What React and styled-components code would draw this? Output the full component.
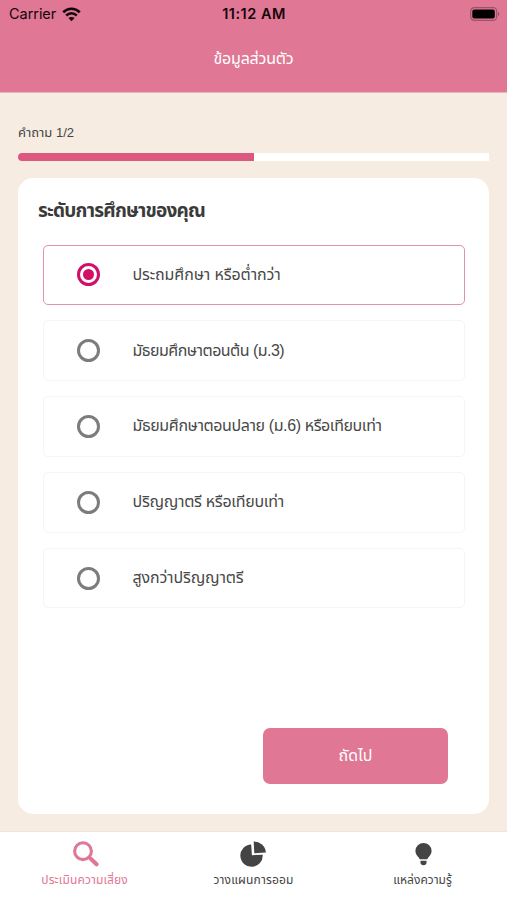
import React, { useState } from 'react';
import styled, { createGlobalStyle } from 'styled-components';

const pink = '#df7795';

const GlobalStyle = createGlobalStyle`
  *, *::before, *::after { box-sizing: border-box; }
  body { margin: 0; background: #f6ece2; }
  button { font: inherit; border: 0; background: none; padding: 0; }
`;

const Screen = styled.div`
  width: 507px;
  height: 900px;
  display: flex;
  flex-direction: column;
  overflow: hidden;
  background: #f6ece2;
  color: #444;
  font-family: 'Liberation Sans', 'Noto Sans Thai', sans-serif;
`;

const Header = styled.header`
  height: 93px;
  flex: none;
  background: ${pink};
  border-bottom: 1px solid #e8b4bf;
`;

const StatusBar = styled.div`
  height: 28px;
  display: grid;
  grid-template-columns: 1fr auto 1fr;
  align-items: center;
  padding: 0 7px 0 9px;
  color: #16060b;
  font: 400 14.5px/28px Inter, sans-serif;
`;

const Carrier = styled.div`
  display: flex;
  align-items: center;
  gap: 6px;
  letter-spacing: -0.05px;
`;

const Clock = styled.div`
  font-weight: 600;
  letter-spacing: 0.5px;
  margin-right: 1px;
`;

const BatterySlot = styled.div`
  display: flex;
  justify-content: flex-end;
`;

const Label = styled.span`
  display: block;
  white-space: nowrap;
  font-size: ${(p) => p.$size}px;
  line-height: 24px;
  letter-spacing: ${(p) => p.$track || 0}px;
  font-weight: ${(p) => p.$weight || 400};
`;

const PageTitle = styled.h1`
  margin: 0;
  padding-top: 19px;
  display: flex;
  justify-content: center;
  color: #fff;
  font-weight: 400;
`;

const Content = styled.main`
  flex: 1;
  min-height: 0;
  padding: 28px 18px 17px;
  display: flex;
  flex-direction: column;
`;

const Progress = styled.div`
  height: 8px;
  flex: none;
  margin: 8px 0 17px;
  border-radius: 4px 0 0 4px;
  overflow: hidden;
  background: #fff;
`;

const ProgressFill = styled.div`
  width: 50%;
  height: 100%;
  background: #dc5880;
`;

const Card = styled.section`
  flex: 1;
  min-height: 0;
  padding: 21px 25px 30px;
  border-radius: 15px;
  background: #fff;
  display: flex;
  flex-direction: column;
`;

const Question = styled.h2`
  margin: 0 0 21.5px -5px;
  color: #3b3b3b;
`;

const Options = styled.div`
  display: flex;
  flex-direction: column;
  gap: 15px;
`;

const Option = styled.button`
  width: 422px;
  height: 60.8px;
  display: flex;
  align-items: center;
  padding-left: 33px;
  border: 1px solid ${(p) => (p.$selected ? '#e391ac' : '#f5f5f5')};
  border-radius: 5px;
  color: #484848;
  text-align: left;
`;

const Radio = styled.span`
  width: 23px;
  height: 23px;
  margin-right: 32.5px;
  flex: none;
  display: grid;
  place-items: center;
  border: 3px solid ${(p) => (p.$selected ? '#d10f68' : '#7c7c7c')};
  border-radius: 50%;

  &::after {
    content: '';
    width: 11px;
    height: 11px;
    border-radius: 50%;
    background: ${(p) => (p.$selected ? '#d10f68' : 'transparent')};
  }
`;

const NextButton = styled.button`
  width: 185px;
  height: 56px;
  margin: auto 16px 0 auto;
  display: flex;
  align-items: center;
  justify-content: center;
  border-radius: 7px;
  background: ${pink};
  color: #fff;
`;

const TabBar = styled.nav`
  height: 69px;
  flex: none;
  display: grid;
  grid-template-columns: repeat(3, 169px);
  background: #fff;
  border-top: 1px solid #eee5de;
`;

const Tab = styled.button`
  display: flex;
  flex-direction: column;
  align-items: center;
  padding-top: 7px;
  color: ${(p) => (p.$active ? pink : '#444')};

  svg { display: block; height: 29px; }
`;

const WifiIcon = () => (
  <svg width="19" height="15" viewBox="0 0 19 15" fill="none" stroke="#16060b" strokeWidth="2.6">
    <path d="M1.2 5.2C6 .6 13 .6 17.8 5.2" />
    <path d="M4.2 8.5C7.3 5.6 11.7 5.6 14.8 8.5" />
    <path d="M9.5 14.2 6.4 11.1C8.2 9.5 10.8 9.5 12.6 11.1Z" fill="#16060b" stroke="none" />
  </svg>
);

const BatteryIcon = () => (
  <svg width="30" height="14" viewBox="0 0 30 14">
    <rect x=".7" y=".7" width="26" height="12.6" rx="3.6" fill="none" stroke="#9c5368" strokeWidth="1.2" />
    <rect x="2.3" y="2.4" width="22.5" height="9.2" rx="2" fill="#000" />
    <path d="M28 4.8c1.8.8 1.8 3.6 0 4.4Z" fill="#9c5368" />
  </svg>
);

const SearchIcon = () => (
  <svg width="28" height="29" viewBox="0 0 28 29" fill="none" stroke="currentColor">
    <circle cx="12" cy="12.2" r="8.4" strokeWidth="3.1" />
    <path d="m18 18.2 1.5 1.5" strokeWidth="3" />
    <path d="m20 20 5.500 5.300" strokeWidth="4.200" strokeLinecap="round" />
  </svg>
);

const PieIcon = () => (
  <svg width="27" height="29" viewBox="0 0 27 29" fill="currentColor">
    <path d="M11.2 5.4 11.9 16.200 22.700 15.800A11.200 11.200 0 1 1 11.200 5.400Z" />
    <path d="M13.700 2.400A12.200 12.200 0 0 1 25.900 13.600L14.300 14.200Z" />
  </svg>
);

const BulbIcon = () => (
  <svg width="18" height="29" viewBox="0 0 18 29" fill="currentColor">
    <path d="M9.500 4a8.100 8.100 0 0 1 8.100 8c0 3.200-1.900 4.700-3.300 6.600-.5.800-.8 1.700-1.500 1.700H6.200c-.7 0-1-.9-1.500-1.700C3.300 16.700 1.400 15.200 1.400 12a8.100 8.100 0 0 1 8.100-8Z" />
    <path d="M6.500 21.700h6v2c0 1.500-1.200 2.500-3 2.500s-3-1-3-2.500Z" />
  </svg>
);

const options = [
  { text: 'ประถมศึกษา หรือต่ำกว่า', track: -0.12 },
  { text: 'มัธยมศึกษาตอนต้น (ม.3)', track: -0.53 },
  { text: 'มัธยมศึกษาตอนปลาย (ม.6) หรือเทียบเท่า', track: -0.4 },
  { text: 'ปริญญาตรี หรือเทียบเท่า', track: -0.28 },
  { text: 'สูงกว่าปริญญาตรี', track: -0.15 },
];

const tabs = [
  { text: 'ประเมินความเสี่ยง', Icon: SearchIcon, track: 0.12 },
  { text: 'วางแผนการออม', Icon: PieIcon, track: 0.15 },
  { text: 'แหล่งความรู้', Icon: BulbIcon, track: 0 },
];

export default function App() {
  const [selected, setSelected] = useState(0);
  return (
    <>
      <GlobalStyle />
      <Screen>
        <Header>
          <StatusBar>
            <Carrier>Carrier <WifiIcon /></Carrier>
            <Clock>11:12 AM</Clock>
            <BatterySlot><BatteryIcon /></BatterySlot>
          </StatusBar>
          <PageTitle><Label $size={16} $track={-0.2}>ข้อมูลส่วนตัว</Label></PageTitle>
        </Header>
        <Content>
          <Label $size={13}>คำถาม 1/2</Label>
          <Progress><ProgressFill /></Progress>
          <Card>
            <Question><Label $size={19} $weight={700} $track={-0.78}>ระดับการศึกษาของคุณ</Label></Question>
            <Options>
              {options.map((o, i) => (
                <Option key={o.text} $selected={i === selected} onClick={() => setSelected(i)}>
                  <Radio $selected={i === selected} />
                  <Label $size={16} $track={o.track}>{o.text}</Label>
                </Option>
              ))}
            </Options>
            <NextButton><Label $size={16}>ถัดไป</Label></NextButton>
          </Card>
        </Content>
        <TabBar>
          {tabs.map(({ text, Icon, track }, i) => (
            <Tab key={text} $active={i === 0}>
              <Icon />
              <Label $size={12} $track={track}>{text}</Label>
            </Tab>
          ))}
        </TabBar>
      </Screen>
    </>
  );
}
